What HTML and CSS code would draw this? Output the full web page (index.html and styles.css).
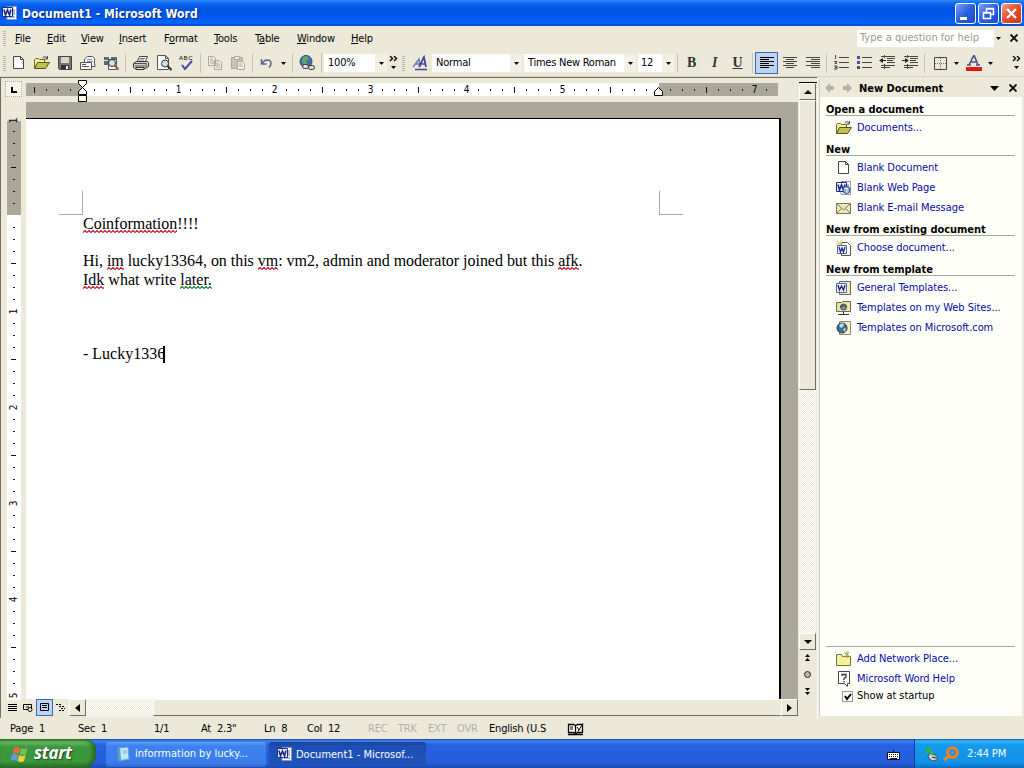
FILE: index.html
```html
<!DOCTYPE html>
<html lang="en">
<head>
  <meta charset="UTF-8" />
  <title>Document1 - Microsoft Word</title>
  <link rel="stylesheet" href="styles.css">
</head>
<body>

<!-- Shared icons -->
<svg class="defs" width="0" height="0">
  <symbol id="word" viewBox="0 0 16 16">
    <path d="M5 1.500h9.500v13H5z" fill="#fff" stroke="#8b98b8"/>
    <path d="M11 5h2M11 7h2M11 9h2M7 12h6" stroke="#5269ad"/>
    <path d="M.5 2.500h10v9H.5z" fill="#f4f6ff" stroke="#1c2b85"/>
    <path d="M2 4.500l1.500 5.500 2-5 2 5 1.500-5.500" fill="none" stroke="#1c2b85" stroke-width="1.600"/>
  </symbol>
  <symbol id="page" viewBox="0 0 16 16">
    <path d="M2.500 1.500h7l3 3v9h-10z" fill="#fff" stroke="#444"/>
    <path d="M9.500 1.500v3h3" fill="none" stroke="#444"/>
  </symbol>
  <symbol id="folder" viewBox="0 0 16 16">
    <path d="M.5 13.500v-9l1-1h3l1 1h5v3" fill="#f7f09a" stroke="#6d6a1c"/>
    <path d="M.5 13.500l3-6h12l-4 6z" fill="#c4c050" stroke="#55531a"/>
    <path d="M8.500 3q3-3 5 1m0-3v3h-3" fill="none" stroke="#444"/>
  </symbol>
  <symbol id="down" viewBox="0 0 5 3"><path d="M0 0h5L2.500 3z"/></symbol>
  <symbol id="cross" viewBox="0 0 8 8"><path d="M0.500 .5l7 7M7.500 .5l-7 7" fill="none" stroke="#000" stroke-width="1.800"/></symbol>
  <symbol id="more" viewBox="0 0 10 14">
    <path d="M1 0l2.500 2.500L1 5M5 0l2.500 2.500L5 5" fill="none" stroke="#000" stroke-width="1.400"/>
    <path d="M2 10h5L4.500 13z"/>
  </symbol>
  <symbol id="lefta" viewBox="0 0 10 10"><path d="M0 5l5-5v3h4v4H5v3z" fill="#b5b2a3"/></symbol>
</svg>

<!-- Title bar -->
<header class="titlebar">
  <svg class="i16"><use href="#word"/></svg>
  <h1>Document1 - Microsoft Word</h1>
  <span class="win"><svg width="19" height="19"><path d="M4 14.500h7" stroke="#fff" stroke-width="3"/></svg></span>
  <span class="win"><svg width="19" height="19"><path d="M7.500 8V4.500h7v6H12M7 5h8" fill="none" stroke="#fff" stroke-width="1.500"/><path d="M4.500 8.500h7v6h-7zM4 9h8" fill="none" stroke="#fff" stroke-width="1.500"/></svg></span>
  <span class="win close"><svg width="19" height="19"><path d="M5 5l9 9M14 5l-9 9" stroke="#fff" stroke-width="2.400"/></svg></span>
</header>

<!-- Menu -->
<nav class="menubar">
  <i class="grip"></i>
  <div class="menus">
    <span><u>F</u>ile</span><span><u>E</u>dit</span><span><u>V</u>iew</span><span><u>I</u>nsert</span><span>F<u>o</u>rmat</span><span><u>T</u>ools</span><span>T<u>a</u>ble</span><span><u>W</u>indow</span><span><u>H</u>elp</span>
  </div>
  <div class="question">Type a question for help</div>
  <svg class="drop" width="5" height="3"><use href="#down"/></svg>
  <svg class="menu-close" width="8" height="8"><use href="#cross"/></svg>
</nav>

<!-- Toolbars -->
<div class="toolbar">
  <i class="grip"></i>
  <span class="btn"><svg class="i16"><use href="#page"/></svg></span>
  <span class="btn"><svg class="i16"><use href="#folder"/></svg></span>
  <span class="btn"><svg class="i16"><path d="M1.500 1.500h13v13h-12l-1-1z" fill="#77776d" stroke="#444"/><path d="M4 2h8v6H4z" fill="#d9d7ca"/><path d="M4 10h8v4H4z" fill="#333"/><path d="M9 11h2v3H9z" fill="#fff"/></svg></span>
  <span class="btn"><svg class="i16"><path d="M4.500 8V4l3-2.500h5l2 2V10" fill="#fff" stroke="#555"/><path d="M7 4.500h5M7 6.500h6" stroke="#7988b8"/><path d="M.5 7.500h11v7H.5zM2 9.500h4M2 11.500h7M12 11.500h3v-2" fill="#fff" stroke="#555"/></svg></span>
  <span class="btn"><svg class="i16"><path d="M1 2h5v3H1zM8 2h6v4H8zM1 6h5v4H1z" fill="#65666b"/><path d="M5.500 4.500h8v10h-8z" fill="#fff" stroke="#555"/><circle cx="9" cy="8" r="3.500" fill="#c9e3ef" stroke="#333"/><path d="M11.500 10.500l4 4" stroke="#a84c45" stroke-width="2"/></svg></span>
  <i class="sep s7"></i>
  <span class="btn"><svg class="i16"><path d="M4.500 6l2-4.500h8L12.500 6" fill="#fff" stroke="#444"/><path d="M7 3.500h5M6 5h5" stroke="#777"/><path d="M.5 8.500l3-2h11l1 1v4l-3 2H1.500l-1-1z" fill="#d2d0c3" stroke="#333"/><path d="M1 8.500h12M2 11h10M13 8v5" stroke="#555"/><path d="M3 12.500h8v2H3z" fill="#eee" stroke="#333"/></svg></span>
  <span class="btn"><svg class="i16"><path d="M1.500.5h8l3 3v11h-11z" fill="#fff" stroke="#555"/><path d="M9.500.5v3h3" fill="none" stroke="#555"/><circle cx="9" cy="8.500" r="3.500" fill="#c6e3ef" stroke="#333"/><path d="M11.500 11l4 4" stroke="#333" stroke-width="2"/></svg></span>
  <span class="btn"><svg class="i16"><text x="0" y="5" class="abc">ABC</text><path d="M3 10l3 4 7-8" fill="none" stroke="#4547ad" stroke-width="2"/></svg></span>
  <i class="sep s5"></i>
  <span class="btn"><svg class="i16 grey"><path d="M1.500 1.500h5l2 2v7h-7zM7.500 5.500h5l2 2v7h-7z"/><path d="M3 4h3M3 6h4M3 8h4M9 8h3M9 10h4M9 12h4"/></svg></span>
  <span class="btn"><svg class="i16 grey"><path class="dark" d="M1.500 2.500h11v11h-11z"/><path d="M4.500 1.500h5v3h-5zM7.500 6.500h5l2 2v6h-7z"/><path d="M9 9h3M9 11h4"/></svg></span>
  <i class="sep s6"></i>
  <span class="btn"><svg class="i16"><path d="M2.500 4v5h5M3 8.500c3-5 9-4.500 9 0 0 2-1 3-2 4" fill="none" stroke="#5b638e" stroke-width="1.500"/></svg></span>
  <svg class="drop wide" width="5" height="3"><use href="#down"/></svg>
  <i class="sep s6"></i>
  <span class="btn"><svg class="i16"><circle cx="7" cy="6.500" r="6" fill="#3973ae" stroke="#284d80"/><path d="M4 2l4-1 2 3-3 2 1 3-3 1-2-4z" fill="#67a660"/><rect x="3.500" y="9.500" width="6" height="4" rx="2" fill="#ddd" stroke="#333"/><rect x="9.500" y="10.500" width="6" height="4" rx="2" fill="#ddd" stroke="#333"/></svg></span>
  <i class="sep s6"></i>
  <div class="combo zoom"><span>100%</span><svg width="5" height="3"><use href="#down"/></svg></div>
  <svg class="more" width="10" height="14"><use href="#more"/></svg>
  <i class="grip mid"></i>
  <span class="btn styles"><svg class="i16"><path d="M1 12l6-8 1 8M3 9h5" fill="none" stroke="#6a70b8" stroke-width="1.300"/><path d="M7 12l5-10 2 10M9 9h5M3 14.500h12" fill="none" stroke="#3c44a0" stroke-width="1.700"/></svg></span>
  <div class="combo style"><span>Normal</span><svg width="5" height="3"><use href="#down"/></svg></div>
  <div class="combo font"><span>Times New Roman</span><svg width="5" height="3"><use href="#down"/></svg></div>
  <div class="combo size"><span>12</span><svg width="5" height="3"><use href="#down"/></svg></div>
  <i class="sep s6"></i>
  <span class="btn letter"><b>B</b></span>
  <span class="btn letter"><em>I</em></span>
  <span class="btn letter"><u>U</u></span>
  <i class="sep s6"></i>
  <span class="btn pressed"><svg class="i16"><path d="M1 2.500h14M1 4.500h9M1 6.500h14M1 8.500h9M1 10.500h14M1 12.500h9" stroke="#000"/></svg></span>
  <span class="btn"><svg class="i16"><path d="M1 2.500h14M4 4.500h8M1 6.500h14M4 8.500h8M1 10.500h14M4 12.500h8" stroke="#444"/></svg></span>
  <span class="btn"><svg class="i16"><path d="M1 2.500h14M6 4.500h9M1 6.500h14M6 8.500h9M1 10.500h14M6 12.500h9" stroke="#444"/></svg></span>
  <i class="sep s5"></i>
  <span class="btn"><svg class="i16"><path d="M6 2.500h10M6 7.500h10M6 12.500h10" stroke="#444"/><path d="M2.500 0v4M1 6.500h3l-2 2h2M1 11h3v3H1m1-1.500h2" fill="none" stroke="#444"/></svg></span>
  <span class="btn"><svg class="i16"><path d="M6 2.500h10M6 7.500h10M6 12.500h10" stroke="#444"/><path d="M1 1h3v3H1zM1 6h3v3H1zM1 11h3v3H1z" fill="#4a5185"/></svg></span>
  <span class="btn"><svg class="i16"><path d="M2 1.500h14M8 3.500h8M8 5.500h6M8 7.500h8M2 10.500h14M2 12.500h9M5.500 0v3M5.500 9v5" stroke="#444"/><path d="M7 5.500H1" stroke="#222"/><path d="M0 5.500L4 3v5z" fill="#222"/></svg></span>
  <span class="btn"><svg class="i16"><path d="M2 1.500h14M8 3.500h8M8 5.500h6M8 7.500h8M2 10.500h14M2 12.500h9M5.500 0v3M5.500 9v5" stroke="#444"/><path d="M0 5.500h6" stroke="#222"/><path d="M7 5.500L3 3v5z" fill="#222"/></svg></span>
  <i class="sep s7"></i>
  <span class="btn"><svg class="i16"><path d="M2.500 2.500h12v12h-12z" fill="none" stroke="#444"/><path d="M8.500 3v11M3 8.500h11" stroke="#777" stroke-dasharray="1 1"/></svg></span>
  <svg class="drop wide" width="5" height="3"><use href="#down"/></svg>
  <span class="btn"><svg class="i16"><path d="M3 10L8 0l4 10M5 7h6M1 10h4M10 10h4" fill="none" stroke="#4a5185" stroke-width="1.600"/><path d="M0 12h16v4H0z" fill="#dd1a13"/></svg></span>
  <svg class="drop wide" width="5" height="3"><use href="#down"/></svg>
  <svg class="more end" width="10" height="14"><use href="#more"/></svg>
</div>

<main class="work">
  <!-- Document window -->
  <section class="docwin">
    <div class="view">
      <div class="toprow">
        <span class="tab"><svg width="16" height="16"><path d="M6 5v5h5" fill="none" stroke="#000" stroke-width="2"/></svg></span>
        <svg class="hruler" width="752" height="22">
          <defs>
            <pattern id="hticks" x="56" y="0" width="96" height="13" patternUnits="userSpaceOnUse">
              <path d="M12.500 6v2M24.500 6v2M36.500 6v2M48.500 4v6M60.500 6v2M72.500 6v2M84.500 6v2" stroke="#111"/>
            </pattern>
          </defs>
          <path d="M0 0h752v13H0z" fill="#aca899"/>
          <path d="M56 0h577v13H56z" fill="#fff"/>
          <path d="M0 0h752v13H0z" fill="url(#hticks)"/>
          <g class="nums"><text x="152.500" y="10">1</text><text x="248.500" y="10">2</text><text x="344.500" y="10">3</text><text x="440.500" y="10">4</text><text x="536.500" y="10">5</text><text x="728.500" y="10">7</text></g>
          <path d="M52.500-2.500h8v3l-4 4-4-4zM52.500 11.500v-3l4-4 4 4v3zM52.500 12.500h8v6h-8z" fill="#fffff4" stroke="#000"/>
          <path d="M628.500 12.500v-4l4-4 4 4v4z" fill="#fffff4" stroke="#000"/>
        </svg>
      </div>
      <div class="pagerow">
        <svg class="vruler" width="14" height="582">
          <defs>
            <pattern id="vticks" x="0" y="97" width="14" height="96" patternUnits="userSpaceOnUse">
              <path d="M6 12.500h2M6 24.500h2M6 36.500h2M4 48.500h5M6 60.500h2M6 72.500h2M6 84.500h2" stroke="#111"/>
            </pattern>
          </defs>
          <path d="M0 3h14v94H0z" fill="#aca899"/>
          <path d="M0 97h14v485H0z" fill="#fff"/>
          <path d="M0 4h14v578H0z" fill="url(#vticks)"/>
          <g class="nums"><text transform="translate(10 2.500) rotate(-90)">1</text><text transform="translate(10 193.500) rotate(-90)">1</text><text transform="translate(10 289.500) rotate(-90)">2</text><text transform="translate(10 385.500) rotate(-90)">3</text><text transform="translate(10 481.500) rotate(-90)">4</text><text transform="translate(10 577.500) rotate(-90)">5</text></g>
        </svg>
        <div class="desk">
          <article class="paper">
            <div class="corners"><i></i><i></i></div>
            <p><span class="bad">Coinformation</span>!!!!</p>
            <p>&nbsp;</p>
            <p class="long">Hi, <span class="bad">im</span> lucky13364, on this <span class="bad">vm</span>: vm2, admin and moderator joined but this <span class="bad">afk</span>.</p>
            <p><span class="bad">Idk</span> what write <span class="bad grammar">later.</span></p>
            <p>&nbsp;</p>
            <p>&nbsp;</p>
            <p>&nbsp;</p>
            <p>- Lucky1336<span class="caret"></span></p>
          </article>
        </div>
      </div>
      <div class="hscroll">
        <div class="views">
          <span><svg width="10" height="10"><path d="M0 1.500h9M0 3.500h9M0 5.500h9M0 7.500h9" stroke="#000"/></svg></span>
          <span><svg width="10" height="10"><path d="M.5 1.500h8v5h-8zM3 4h3" fill="none" stroke="#000"/><circle cx="7" cy="6.500" r="2" fill="#fff" stroke="#000"/></svg></span>
          <span class="on"><svg width="10" height="10"><path d="M.5.5h8v7h-8zM2 2.500h5M2 4.500h5" fill="none" stroke="#000"/></svg></span>
          <span><svg width="10" height="10"><path d="M0 1.500h6M3 3.500h6M5 5.500h4M3 7.500h6" stroke="#000" stroke-dasharray="2 1"/></svg></span>
        </div>
        <span class="arrow"><svg width="5" height="8"><path d="M5 0v8L0 4z"/></svg></span>
        <i class="track"></i>
        <i class="thumb"></i>
        <span class="arrow"><svg width="5" height="8"><path d="M0 0v8l5-4z"/></svg></span>
      </div>
    </div>
    <div class="vscroll">
      <i class="split"></i>
      <span class="arrow"><svg width="8" height="4"><path d="M0 4h8L4 0z"/></svg></span>
      <i class="thumb"></i>
      <i class="track"></i>
      <span class="arrow"><svg width="8" height="4"><path d="M0 0h8L4 4z"/></svg></span>
      <div class="browse">
        <svg width="9" height="9"><path d="M2 4h5L4.500 1zM2 8h5L4.500 5z"/></svg>
        <svg width="9" height="9"><circle cx="4.500" cy="4.500" r="3" fill="#bbb9aa" stroke="#222"/></svg>
        <svg width="9" height="9"><path d="M2 1h5L4.500 4zM2 5h5L4.500 8z"/></svg>
      </div>
    </div>
  </section>

  <!-- Task pane -->
  <aside class="pane">
    <div class="pane-head">
      <svg width="10" height="10"><use href="#lefta"/></svg>
      <svg class="flip" width="10" height="10"><use href="#lefta"/></svg>
      <b>New Document</b>
      <svg class="tri" width="9" height="5"><path d="M0 0h9L4.500 5z"/></svg>
      <svg width="8" height="8"><use href="#cross"/></svg>
    </div>
    <div class="pane-body">
      <h2>Open a document</h2>
      <a><svg class="i16"><use href="#folder"/></svg>Documents...</a>
      <h2>New</h2>
      <a><svg class="i16"><use href="#page"/></svg>Blank Document</a>
      <a><svg class="i16"><use href="#word"/><circle cx="10.500" cy="10" r="3.500" fill="#8fa8e0" stroke="#344a91"/><path d="M8 9q2-2 4 0-2 1-1 4" fill="none" stroke="#fff"/></svg>Blank Web Page</a>
      <a><svg class="i16"><path d="M.5 3.500h14v10H.5z" fill="#eceab7" stroke="#77775c"/><path d="M1 4l6.500 6L14 4M1 13l4.500-4.500M14 13L9.500 8.500" fill="none" stroke="#77775c"/></svg>Blank E-mail Message</a>
      <h2>New from existing document</h2>
      <a><svg class="i16"><path d="M5.500 2.500h6l3 3v10h-9z" fill="#fff" stroke="#555"/><path d="M1 1l5 4M5 0v5M0 4h7" stroke="#c9bd62"/><path d="M1.500 5.500h9v8h-9z" fill="#f4f6ff" stroke="#586492"/><path d="M3 7l1.500 5L6 8l1.500 4L9 7" fill="none" stroke="#1c2b85" stroke-width="1.300"/></svg>Choose document...</a>
      <h2>New from template</h2>
      <a><svg class="i16"><path d="M3.500 1.500h11v13h-11z" fill="#f5f1bf" stroke="#666"/><path d="M.5 3.500h10v9H.5z" fill="#f4f6ff" stroke="#586492"/><path d="M2 5l1.500 5 2-4 2 4L9 5" fill="none" stroke="#1c2b85" stroke-width="1.400"/></svg>General Templates...</a>
      <a><svg class="i16"><path d="M.5 11.500v-9h5l1-1h8v10z" fill="#ece5a0" stroke="#666"/><circle cx="7.500" cy="7" r="3" fill="#8298ab" stroke="#444"/><path d="M5 7q3-3 5 0M7.500 12v2M2 14.500h11" fill="none" stroke="#333"/></svg>Templates on my Web Sites...</a>
      <a><svg class="i16"><path d="M3.500 1.500h11v13h-11z" fill="#f5f1bf" stroke="#888"/><circle cx="6" cy="8" r="5" fill="#3e6e9e" stroke="#334"/><path d="M3 5q3-3 5-1L7 7 5 8zM7 9l3-1-1 4z" fill="#bde0d1"/></svg>Templates on Microsoft.com</a>
      <div class="foot">
        <a><svg class="i16"><path d="M.5 14.500v-11h5l1 2h8v9z" fill="#f5ee9b" stroke="#77733b"/><path d="M8 1l6 5M13 1L9 6M11 0v7" stroke="#a49d53"/></svg>Add Network Place...</a>
        <a><svg class="i16"><path d="M2.500.5h11v12h-2v3l-3-3h-6z" fill="#fff" stroke="#444"/><path d="M6 5V3.500h4V6L8 7.500V9m0 1v1.500" fill="none" stroke="#333" stroke-width="1.300"/></svg>Microsoft Word Help</a>
        <label><span class="check"><svg width="8" height="8"><path d="M1 3l2 3 4-5" fill="none" stroke="#000" stroke-width="2"/></svg></span>Show at startup</label>
      </div>
    </div>
  </aside>
</main>

<!-- Status bar -->
<div class="status">
  <span>Page&nbsp; 1</span><span>Sec&nbsp; 1</span><span>1/1</span><span>At&nbsp; 2.3"</span><span>Ln&nbsp; 8</span><span>Col&nbsp; 12</span>
  <span class="off">REC</span><span class="off">TRK</span><span class="off">EXT</span><span class="off">OVR</span><span>English (U.S</span>
  <svg width="18" height="14"><path d="M1.500 2.500h5l2 1 2-1h5v8h-5l-2 1-2-1h-5zM8.500 3.500v8M1 12.500h15" fill="#fff" stroke="#000" stroke-width="1.300"/><path d="M3 5h3M3 7h3M11 9.500l5-8M10 5l2 3" stroke="#000"/></svg>
</div>

<!-- Taskbar -->
<footer class="taskbar">
  <div class="start">
    <svg width="18" height="18"><path d="M3 3q3-2 6 0L7.500 9Q5 7 1.500 9z" fill="#ec6a3a"/><path d="M10 3q3 2 6.500 0L15 9q-3 2-6.500 0z" fill="#79c14e"/><path d="M1 10q3-2 6 0l-1.500 6Q3 14-.5 16z" fill="#5c9aef"/><path d="M8 10q3 2 6.500 0L13 16q-3 2-6.500 0z" fill="#f6cf3f"/></svg>
    <b>start</b>
  </div>
  <div class="task">
    <svg class="i16"><path d="M3 2l10-1 1 12-10 2z" fill="#b9e7f5" stroke="#5fa9d0"/><path d="M3 2l2-1 1 13-2 1z" fill="#579fc0"/><path d="M8 5h4M8 7h4" stroke="#6fb7d7"/></svg>
    <span>inforrmation by lucky...</span>
  </div>
  <div class="task active">
    <svg class="i16"><use href="#word"/></svg>
    <span>Document1 - Microsof...</span>
  </div>
  <svg class="kbd" width="14" height="10"><path d="M.5 2.500h12v7H.5z" fill="#fff" stroke="#111"/><path d="M2 4.500h9M2 6.500h9" stroke="#111" stroke-dasharray="1 1"/><path d="M3 8.500h7M6.500 2V0" stroke="#111"/></svg>
  <div class="tray">
    <svg width="16" height="16"><path d="M5 7l7 3v4l-5 1-4-4z" fill="#c9d4cf" stroke="#44524e"/><path d="M1 2l5-1-1 3 4 3-2 2-4-3-2 2z" fill="#32b33a"/><path d="M7 11l4 1" stroke="#222"/></svg>
    <svg width="16" height="16"><circle cx="9.500" cy="6.500" r="4.800" fill="none" stroke="#ef8423" stroke-width="3"/><path d="M6 10l-5 4" stroke="#ef8423" stroke-width="3"/><circle cx="9.500" cy="6.500" r="1.300" fill="#ef8423"/></svg>
    <time>2:44 PM</time>
  </div>
</footer>

</body>
</html>
```
FILE: styles.css
```css
* { box-sizing: border-box; }

body {
  margin: 0;
  width: 1024px;
  height: 768px;
  overflow: hidden;
  display: flex;
  flex-direction: column;
  background: #ece9d8;
  color: #000;
  font: 11px/14px "DejaVu Sans Condensed", "DejaVu Sans", sans-serif;
  letter-spacing: -0.2px;
  white-space: nowrap;
}

svg { display: block; flex: none; }
.defs { position: absolute; }
.i16 { width: 16px; height: 16px; }
i { flex: none; }

/* Title bar */
.titlebar {
  height: 26px;
  flex: none;
  display: flex;
  align-items: center;
  padding: 0 2px;
  background: linear-gradient(#2a8afa 0, #0a62ee 4px, #0054e3 9px, #0058ec 17px, #0566fa 23px, #0048c8 26px);
}
.titlebar h1 {
  margin: 1px auto 0 4px;
  color: #fff;
  font: bold 12px/16px "DejaVu Sans Condensed", sans-serif;
  letter-spacing: 0.05px;
  text-shadow: 1px 1px 1px #0a2a80;
}
.win {
  width: 21px;
  height: 21px;
  margin-left: 2px;
  border: 1px solid #fff;
  border-radius: 3px;
  background: linear-gradient(135deg, #7ba2f5, #2a5fe0 50%, #1c4bd0);
}
.win.close { background: linear-gradient(135deg, #f0a088, #e0502b 50%, #c93a12); }

/* Menu bar */
.menubar {
  height: 24px;
  flex: none;
  display: flex;
  align-items: center;
  padding-right: 6px;
}
.grip {
  width: 3px;
  height: 15px;
  margin-left: 3px;
  background: repeating-linear-gradient(#b9b6a5 0 1px, transparent 1px 2px);
}
.menus {
  margin: 1px auto 0 9px;
  padding-top: 1px;
  display: grid;
  grid-template-columns: 32px 34px 38px 45px 50px 41px 42px 54px 30px;
}
.question {
  width: 137px;
  height: 17px;
  padding: 1px 3px;
  background: #fff;
  color: #9d9a8e;
  letter-spacing: 0;
}
.menubar .drop { margin: 0 9px 0 2px; }

/* Toolbars */
.toolbar {
  height: 27px;
  flex: none;
  display: flex;
  align-items: center;
  border-bottom: 1px solid #d8d4c2;
}
.btn {
  width: 23px;
  height: 22px;
  flex: none;
  display: flex;
  align-items: center;
  justify-content: center;
}
.toolbar .grip + .btn { margin-left: 1px; }
.toolbar .grip + .btn.styles { margin-left: 0; width: 24px; }
.grip.mid { margin: 0 3px; }
.pressed { background: #c1d2ee; border: 1px solid #316ac5; }
.abc { font: 6px "Liberation Sans", sans-serif; letter-spacing: 0.6px; }
.grey { fill: #f2efe2; stroke: #aca899; }
.grey .dark { fill: #c5c2b3; }
.letter { font: 14px "Liberation Serif", serif; color: #333; }
.letter u { font-weight: bold; }
.letter em { font-weight: bold; }
.sep { height: 20px; background: linear-gradient(#c5c2b8, #c5c2b8) center / 1px 100% no-repeat; }
.s5 { width: 5px; }
.s6 { width: 6px; }
.s7 { width: 7px; }
.drop.wide { margin: 0 3px; }
.more { margin: 0 0 0 2px; }
.more.end { margin: 0 2px 0 auto; }
.combo {
  flex: none;
  height: 18px;
  display: flex;
  align-items: center;
  justify-content: space-between;
  padding: 0 3px 0 4px;
  background: linear-gradient(90deg, #fff calc(100% - 12px), #f3f1e6 0);
}
.zoom { width: 63px; }
.style { width: 90px; padding-left: 4px; margin-right: 2px; }
.font { width: 112px; padding-left: 4px; margin-right: 2px; letter-spacing: -0.25px; }
.size { width: 36px; padding-left: 3px; }

/* Work area */
.work { height: 641px; flex: none; display: flex; }
.docwin {
  width: 818px;
  flex: none;
  display: flex;
  border-top: 1px solid #716f64;
  border-left: 1px solid #716f64;
  border-right: 1px solid #fff;
}
.view { width: 798px; display: flex; flex-direction: column; padding-left: 4px; }
.toprow { height: 24px; flex: none; display: flex; align-items: flex-start; padding-top: 5px; }
.tab { width: 17px; height: 16px; margin-right: 4px; margin-top: -2px; border: 1px dotted #aca899; background: #f7f5ea; }
.hruler { overflow: visible; z-index: 1; }
.nums { font: 10px "DejaVu Sans Condensed", sans-serif; text-anchor: middle; letter-spacing: 0; }
.pagerow { height: 597px; flex: none; display: flex; }
.vruler { margin: 16px 5px 0 2px; overflow: hidden; }
.desk { width: 772px; padding-top: 16px; background: #aca899; }
.paper {
  width: 755px;
  height: 581px;
  padding: 72px 0 0 57px;
  border-top: 1px solid #000;
  border-right: 2px solid #000;
  background: #fff;
  font: 16px/18.5px "Liberation Serif", serif;
  letter-spacing: 0;
}
.paper p { margin: 0; }
.long { letter-spacing: -0.03px; }
.corners { width: 624px; height: 24px; margin-left: -24px; display: flex; justify-content: space-between; }
.corners i { width: 24px; height: 24px; border: solid #aaa; border-width: 0 1px 1px 0; }
.corners i + i { border-width: 0 0 1px 1px; }
.bad {
  padding-bottom: 1px;
  background: url("data:image/svg+xml,%3Csvg xmlns='http://www.w3.org/2000/svg' width='4' height='3'%3E%3Cpath d='M0 2.500l2-2 2 2' fill='none' stroke='%23c8102e' stroke-width='1.200'/%3E%3C/svg%3E") left bottom repeat-x;
}
.grammar {
  background-image: url("data:image/svg+xml,%3Csvg xmlns='http://www.w3.org/2000/svg' width='4' height='3'%3E%3Cpath d='M0 2.500l2-2 2 2' fill='none' stroke='%23108030' stroke-width='1.200'/%3E%3C/svg%3E");
}
.caret { display: inline-block; width: 2px; height: 17px; margin-left: -2px; vertical-align: -4px; background: #000; }

/* Scroll bars */
.arrow {
  width: 17px;
  height: 17px;
  flex: none;
  display: flex;
  align-items: center;
  justify-content: center;
  border: 1px solid;
  border-color: #fff #716f64 #716f64 #fff;
  background: #ece9d8;
}
.thumb { background: #ece9d8; border: 1px solid; border-color: #fff #716f64 #716f64 #fff; }
.track { background: repeating-conic-gradient(#fff 0 25%, #ece9d8 0 50%) 0 0 / 2px 2px; }
.hscroll { height: 18px; flex: none; display: flex; }
.hscroll .track { width: 67px; }
.hscroll .thumb { width: 628px; height: 17px; border-right-color: #ece9d8; }
.views { width: 64px; display: flex; }
.views span { width: 17px; height: 17px; margin-left: -0.5px; padding: 4px 0 0 3px; }
.views .on { padding-top: 3px; background: #c1d2ee; border: 1px solid #316ac5; }
.vscroll { width: 18px; display: flex; flex-direction: column; }
.split { height: 5px; border-bottom: 1px solid #000; }
.vscroll .thumb { height: 290px; width: 17px; }
.vscroll .track { flex: 1; width: 17px; }
.browse { height: 68px; padding: 3px 4px; display: flex; flex-direction: column; gap: 8px; }

/* Task pane */
.pane { flex: 1; margin: 2px 2px 2px 1px; display: flex; flex-direction: column; border-left: 1px solid #d5d2c5; background: #fffffa; }
.pane-head { height: 18px; flex: none; display: flex; align-items: center; padding: 0 5px; background: #ece9d8; gap: 7px; }
.pane-head b { margin: 0 auto 0 0; padding-top: 1px; }
.flip { transform: scaleX(-1); }
.tri { margin-right: 3px; }
.pane-body { flex: 1; display: flex; flex-direction: column; padding: 5px 7px 0 6px; letter-spacing: -0.07px; }
h2 { margin: 0; height: 14px; font: bold 11px/16px "DejaVu Sans Condensed", sans-serif; letter-spacing: -0.05px; border-bottom: 1px solid #aca899; }
.pane-body h2:not(:first-child) { margin-top: 6px; }
.pane b { letter-spacing: 0; }
.pane a { height: 20px; display: flex; align-items: center; gap: 5px; padding: 4px 0 0 10px; color: #0a0aa5; }
.pane a .i16 { margin-top: -1px; }
.foot { margin-top: auto; height: 70px; border-top: 1px solid #aca899; }
.foot label { display: flex; align-items: center; padding: 1px 0 0 16px; gap: 4px; height: 17px; }
.check { width: 11px; height: 11px; padding: 1px; border: 1px solid #999; background: #fff; }

/* Status bar */
.status { height: 21px; flex: none; display: grid; grid-template-columns: 68px 76px 47px 63px 43px 61px 30px 30px 29px 32px 78px 20px; align-items: center; padding: 1px 0 0 10px; }
.off { color: #b3b0a2; }

/* Taskbar */
.taskbar {
  height: 29px;
  flex: none;
  display: flex;
  align-items: center;
  color: #fff;
  letter-spacing: 0;
  background: linear-gradient(#1941a5 0, #3d86f0 2px, #2760e0 6px, #245edb 24px, #1c49b4 29px);
}
.start {
  width: 96px;
  height: 29px;
  display: flex;
  align-items: center;
  padding-left: 11px;
  gap: 5px;
  border-radius: 0 10px 12px 0;
  background: linear-gradient(#2b6d2b 0, #6abb66 3px, #3c963c 8px, #3a983a 22px, #276f27 29px);
  box-shadow: inset -3px 0 4px #256225;
}
.start b { margin-top: -1px; font: italic bold 17px/20px "Open Sans", sans-serif; letter-spacing: -0.3px; text-shadow: 1px 1px 2px #1c401c; }
.task {
  width: 160px;
  height: 25px;
  margin: 1px 0 0 10px;
  display: flex;
  align-items: center;
  padding-left: 9px;
  gap: 4px;
  border-radius: 3px;
  background: linear-gradient(#5fa0fb, #3c81f0 4px, #3a7cec 21px, #2f68d0);
}
.task.active { width: 157px; margin-left: 3px; padding-left: 8px; gap: 3px; background: linear-gradient(#173e94, #1e4fb4 4px, #2053bb); }
.task.active span { padding-top: 1px; }
.kbd { margin: 3px 13px 0 auto; }
.tray {
  width: 110px;
  height: 29px;
  display: flex;
  align-items: center;
  padding-left: 10px;
  gap: 2px;
  border-left: 1px solid #0b3d91;
  background: linear-gradient(#0c59b9 0, #39b6f5 2px, #129aee 6px, #1290e8 24px, #0b6bbb 29px);
}
.tray time { margin-left: 6px; letter-spacing: -0.1px; }
```
